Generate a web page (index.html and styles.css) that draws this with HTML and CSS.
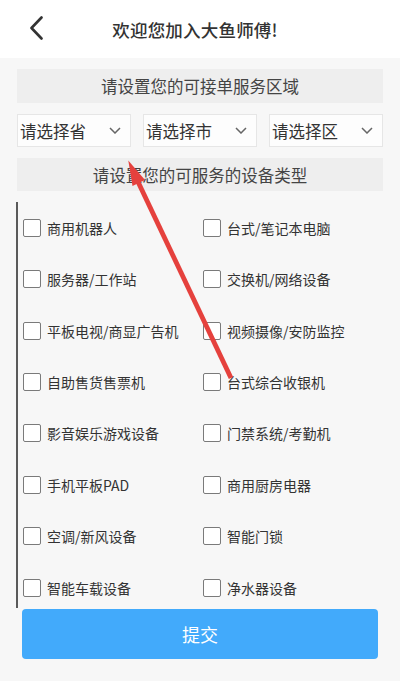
FILE: index.html
```html
<!DOCTYPE html>
<html lang="zh-CN">
<head>
<meta charset="utf-8">
<title>欢迎您加入大鱼师傅!</title>
<link rel="stylesheet" href="styles.css">
</head>
<body>
<div class="page">
  <header class="topbar">
    <svg class="back" width="14" height="24" viewBox="0 0 14 24"><path d="M12.5 1.5 L2.5 12 L12.5 22.5" fill="none" stroke="#333" stroke-width="2.6" stroke-linecap="round" stroke-linejoin="round"/></svg>
    <h1 class="title">欢迎您加入大鱼师傅!</h1>
  </header>
  <main class="content">
    <div class="section-head">请设置您的可接单服务区域</div>
    <div class="selects">
      <div class="select"><span>请选择省</span><svg class="chev" width="12" height="7" viewBox="0 0 12 7"><path d="M1 1 L6 6 L11 1" fill="none" stroke="#666" stroke-width="1.5"/></svg></div>
      <div class="select"><span>请选择市</span><svg class="chev" width="12" height="7" viewBox="0 0 12 7"><path d="M1 1 L6 6 L11 1" fill="none" stroke="#666" stroke-width="1.5"/></svg></div>
      <div class="select"><span>请选择区</span><svg class="chev" width="12" height="7" viewBox="0 0 12 7"><path d="M1 1 L6 6 L11 1" fill="none" stroke="#666" stroke-width="1.5"/></svg></div>
    </div>
    <div class="section-head">请设置您的可服务的设备类型</div>
    <div class="list">
      <div class="grid">
        <label class="item"><span class="box"></span><span>商用机器人</span></label>
        <label class="item"><span class="box"></span><span>台式/笔记本电脑</span></label>
        <label class="item"><span class="box"></span><span>服务器/工作站</span></label>
        <label class="item"><span class="box"></span><span>交换机/网络设备</span></label>
        <label class="item"><span class="box"></span><span>平板电视/商显广告机</span></label>
        <label class="item"><span class="box"></span><span>视频摄像/安防监控</span></label>
        <label class="item"><span class="box"></span><span>自助售货售票机</span></label>
        <label class="item"><span class="box"></span><span>台式综合收银机</span></label>
        <label class="item"><span class="box"></span><span>影音娱乐游戏设备</span></label>
        <label class="item"><span class="box"></span><span>门禁系统/考勤机</span></label>
        <label class="item"><span class="box"></span><span>手机平板PAD</span></label>
        <label class="item"><span class="box"></span><span>商用厨房电器</span></label>
        <label class="item"><span class="box"></span><span>空调/新风设备</span></label>
        <label class="item"><span class="box"></span><span>智能门锁</span></label>
        <label class="item"><span class="box"></span><span>智能车载设备</span></label>
        <label class="item"><span class="box"></span><span>净水器设备</span></label>
      </div>
    </div>
    <button class="submit">提交</button>
  </main>
  <svg class="arrow" width="400" height="681" viewBox="0 0 400 681">
    <line x1="231" y1="378" x2="135.5" y2="176.5" stroke="#e5413d" stroke-width="4.8"/>
    <polygon points="128.3,160.5 132.5,186 145,180" fill="#e5413d"/>
  </svg>
</div>
</body>
</html>
```
FILE: styles.css
```css
* { box-sizing: border-box; }
html, body { margin: 0; padding: 0; }
body {
  width: 400px;
  height: 681px;
  overflow: hidden;
  background: #f7f7f7;
  font-family: "Noto Sans CJK SC", "Noto Sans", sans-serif;
  color: #333;
}
.page { position: relative; width: 400px; height: 681px; }
.topbar {
  height: 58px;
  background: #fff;
  display: flex;
  align-items: center;
  justify-content: center;
  position: relative;
}
.back { position: absolute; left: 29px; top: 16px; }
.title {
  margin: 0;
  font-size: 17.5px;
  font-weight: 500;
  color: #333;
  letter-spacing: 0.2px;
  padding-right: 10px;
}
.content { padding: 0 17px; }
.section-head {
  margin-top: 11px;
  height: 34px;
  background: #eeeeee;
  display: flex;
  align-items: center;
  justify-content: center;
  font-size: 16.5px;
  color: #444;
}
.section-head + .list { margin-top: 11px; }
.selects {
  margin-top: 11px;
  display: grid;
  grid-template-columns: repeat(3, 1fr);
  gap: 12px;
  height: 33px;
}
.select {
  background: #fdfdfd;
  border: 1px solid #e6e6e6;
  display: flex;
  align-items: center;
  justify-content: space-between;
  padding: 0 9px 0 2px;
  font-size: 16.5px;
  color: #333;
}
.chev { display: block; }
.selects + .section-head { height: 33px; }
.list {
  height: 406px;
  overflow: hidden;
  border-left: 2px solid #5a5a5a;
  margin-left: -1px;
  padding-left: 5px;
}
.grid {
  display: grid;
  grid-template-columns: 180px 1fr;
  grid-auto-rows: 51.43px;
}
.item {
  display: flex;
  align-items: center;
  font-size: 14px;
  color: #333;
}
.box {
  width: 18px;
  height: 18px;
  border: 1.5px solid #7a7a7a;
  border-radius: 2px;
  background: #fff;
  margin-right: 6px;
  flex: none;
}
.submit {
  display: flex;
  align-items: center;
  justify-content: center;
  margin: 1px 5px 0;
  width: 356px;
  height: 50px;
  border: none;
  border-radius: 4px;
  background: #42aafb;
  color: #fff;
  font-family: "Noto Sans CJK SC", "Noto Sans", sans-serif;
  font-size: 18px;
  padding: 0;
}
.arrow { position: absolute; left: 0; top: 0; pointer-events: none; }
```
